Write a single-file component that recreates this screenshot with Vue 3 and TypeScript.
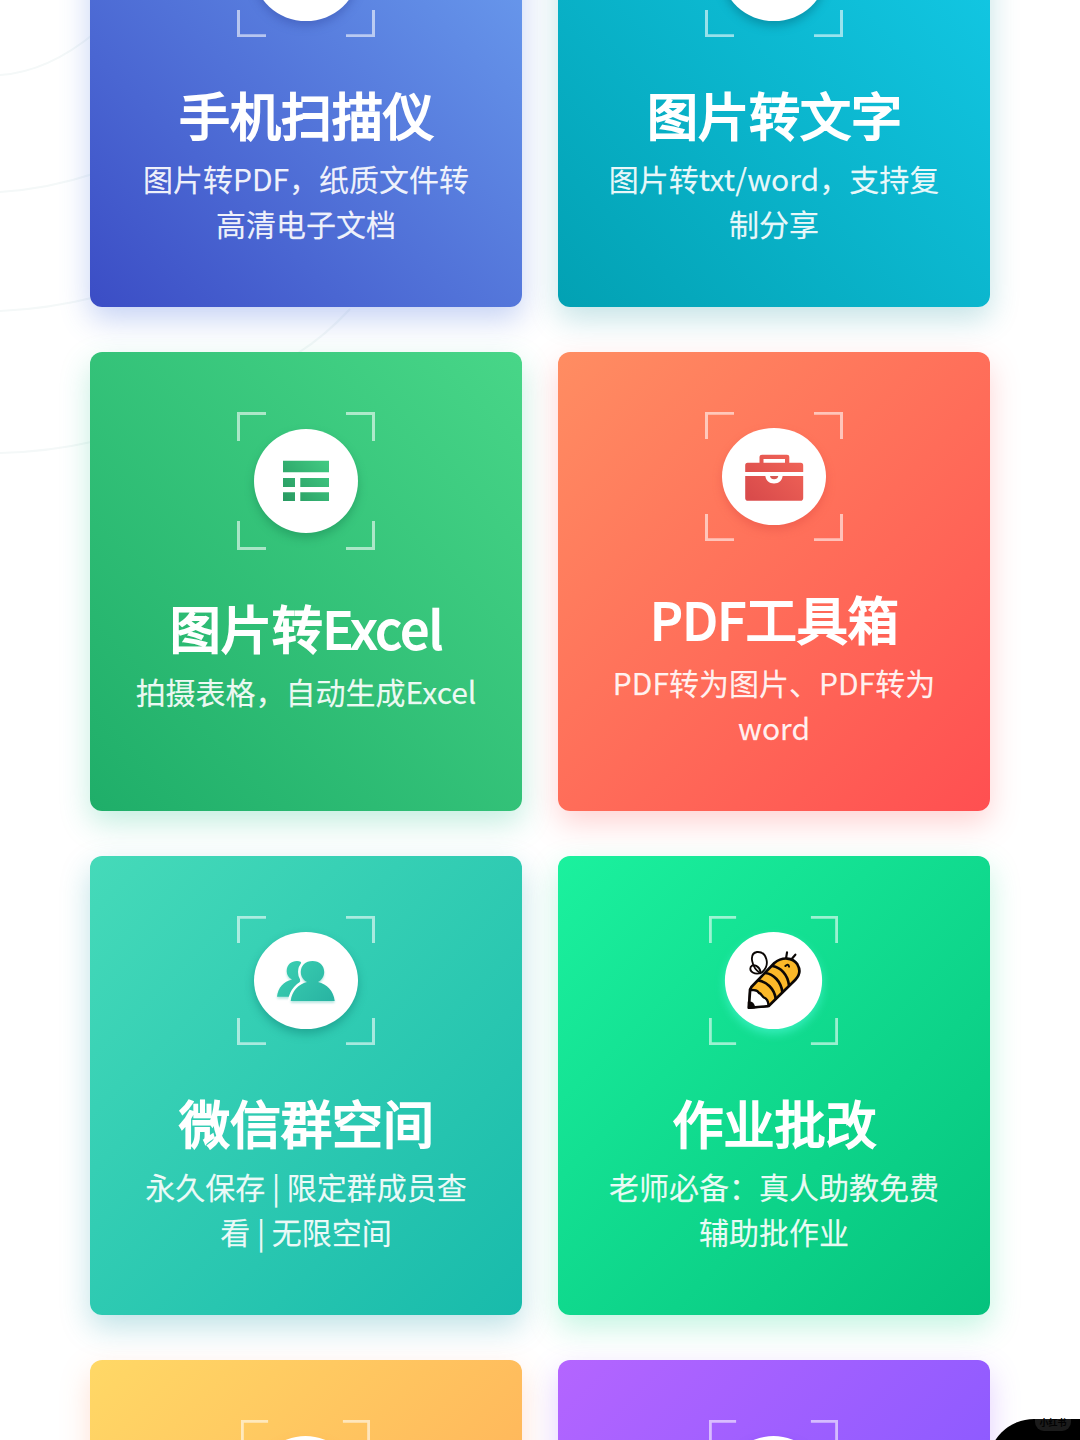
<script setup lang="ts">
type IconName = 'none' | 'table' | 'toolbox' | 'group' | 'bee'

interface Tool {
  id: string
  title: string
  desc: string
  icon: IconName
  shape: 'wide' | 'tall' | 'small'
}

const tools: Tool[] = [
  { id: 'scan', title: '手机扫描仪', desc: '图片转PDF，纸质文件转高清电子文档', icon: 'none', shape: 'wide' },
  { id: 'ocr', title: '图片转文字', desc: '图片转txt/word，支持复制分享', icon: 'none', shape: 'wide' },
  { id: 'excel', title: '图片转Excel', desc: '拍摄表格，自动生成Excel', icon: 'table', shape: 'tall' },
  { id: 'pdf', title: 'PDF工具箱', desc: 'PDF转为图片、PDF转为word', icon: 'toolbox', shape: 'wide' },
  { id: 'space', title: '微信群空间', desc: '永久保存 | 限定群成员查看 | 无限空间', icon: 'group', shape: 'wide' },
  { id: 'homework', title: '作业批改', desc: '老师必备：真人助教免费辅助批作业', icon: 'bee', shape: 'small' },
  { id: 'more-a', title: '', desc: '', icon: 'none', shape: 'small' },
  { id: 'more-b', title: '', desc: '', icon: 'none', shape: 'small' },
]

const frontPerson =
  'M53.700 91C55 80 61.500 73 70 70.700C66 68.500 63.800 64.500 63.800 60C63.800 53 68.500 48.200 75.500 48.200S87.200 53 87.200 60C87.200 64.500 85 68.500 81 70.700C90 73 96.500 80 97.700 91Z'
</script>

<template>
  <main class="page">
    <svg class="arcs" viewBox="0 0 400 480" fill="none" stroke="#f4f8f8" stroke-width="2">
      <path d="M0 75Q48 72 96 32" />
      <path d="M0 192Q48 189 96 173" />
      <path d="M0 311Q48 309 96 297" />
      <path d="M0 453Q48 452 96 441" />
      <path d="M298 353Q325 336 350 309" />
    </svg>

    <section class="grid">
      <article v-for="tool in tools" :key="tool.id" class="card" :class="tool.id">
        <svg class="icon" :class="tool.shape" viewBox="0 0 138 138" preserveAspectRatio="none">
          <defs>
            <linearGradient id="g-table" gradientUnits="userSpaceOnUse" x1="46" y1="89" x2="92" y2="49">
              <stop offset="0" stop-color="#289961" /><stop offset="1" stop-color="#41cb83" />
            </linearGradient>
            <linearGradient id="g-box" gradientUnits="userSpaceOnUse" x1="45" y1="90" x2="90" y2="45">
              <stop offset="0" stop-color="#d94b4b" /><stop offset="1" stop-color="#f06357" />
            </linearGradient>
            <linearGradient id="g-group" gradientUnits="userSpaceOnUse" x1="45" y1="50" x2="90" y2="92">
              <stop offset="0" stop-color="#3bceb1" /><stop offset="1" stop-color="#29b5a3" />
            </linearGradient>
          </defs>
          <path class="frame" d="M1.500 29V1.500H29M109 1.500H136.500V29M136.500 109V136.500H109M29 136.500H1.500V109" />
          <circle class="disc" cx="69" cy="69" r="52" />

          <path
            v-if="tool.icon === 'table'"
            fill="url(#g-table)"
            d="M46 48.700H92V60.300H46zM46 66H58V75H46zM63.300 66H92V75H63.300zM46 80.300H58V89H46zM63.300 80.300H92V89H63.300z"
          />

          <g v-else-if="tool.icon === 'toolbox'">
            <path
              fill="url(#g-box)"
              fill-rule="evenodd"
              d="M42.500 54.200H54.500V48Q54.500 45.700 57 45.700H82Q84.300 45.700 84.300 48V54.200H95.800Q98.200 54.200 98.200 57V64.200H40.200V57Q40.200 54.200 42.500 54.200ZM58.500 50.300V54.200H80V50.300Z"
            />
            <path fill="url(#g-box)" d="M40.200 68.500H98.200V92Q98.200 95 95.500 95H43Q40.200 95 40.200 92Z" />
            <path fill="#fff" d="M60.300 67.500H77.700C77.700 73 73.800 76.600 69 76.600S60.300 73 60.300 67.500Z" />
            <path fill="#d85852" d="M65 68.500H73.300Q72.500 72 69.100 72T65 68.500Z" />
          </g>

          <g v-else-if="tool.icon === 'group'">
            <path
              class="person"
              fill="url(#g-group)"
              d="M40 86.300C41 77 46.500 70 55 68C51.500 66 49.700 62.500 49.700 59C49.700 52 54.500 48.200 60 48.200Q62 48.200 64 49.200L62 86.300Z"
            />
            <path fill="#fff" stroke="#fff" stroke-width="5.500" :d="frontPerson" />
            <path class="person" fill="url(#g-group)" :d="frontPerson" />
          </g>

          <g
            v-else-if="tool.icon === 'bee'"
            transform="scale(.3567) translate(-60 -33)"
            fill="none"
            stroke="#0b0705"
            stroke-width="8"
            stroke-linecap="round"
            stroke-linejoin="round"
          >
            <path stroke-width="5.500" d="M214 205C188 188 178 146 204 141C232 139 245 178 220 201" />
            <path stroke-width="5.500" d="M218 203C196 212 180 198 185 186C193 174 212 184 215 202" />
            <path stroke-width="6.500" d="M291 160L294 142M306 164L319 149" />
            <path fill="#fbb829" d="M187 246L256 174C280 154 311 157 325 178C335 195 331 212 319 224L239 303L180 308L183 254Z" />
            <path
              fill="#fff"
              stroke-width="7"
              d="M184 253L180 308L238 303C239 289 232 279 224 277C219 275 217 265 210 264C205 252 192 258 184 253Z"
            />
            <path fill="#0b0705" stroke-width="4" d="M178 291Q193 289 197 308L178 310Z" />
            <path d="M250 183C275 187 296 208 300 241M229 204C254 207 276 230 280 261M208 226C233 230 256 251 260 281" />
            <path stroke-width="6" d="M289 183Q298 174 300 185" />
          </g>
        </svg>
        <h2 class="title">{{ tool.title }}</h2>
        <p class="desc">{{ tool.desc }}</p>
      </article>
    </section>

    <div class="corner"><span class="mark">小红书</span></div>
  </main>
</template>

<style>
body {
  margin: 0;
  overflow: hidden;
}
</style>

<style scoped>
.page {
  position: relative;
  width: 1080px;
  height: 1440px;
  overflow: hidden;
  background: #fff;
  font-family: 'Noto Sans CJK SC', sans-serif;
}

.arcs {
  position: absolute;
  left: 0;
  top: 0;
  width: 400px;
  height: 480px;
}

.grid {
  position: relative;
  display: grid;
  grid-template-columns: 432px 432px;
  grid-auto-rows: 459px;
  gap: 45px 36px;
  justify-content: center;
  margin-top: -152px;
}

.card {
  box-sizing: border-box;
  display: flex;
  flex-direction: column;
  align-items: center;
  padding: 60px 45px 0;
  border-radius: 12px;
  color: #fff;
  text-align: center;
}

.icon {
  flex: none;
  width: 138px;
  height: 129px;
  overflow: visible;
}

.icon.tall {
  height: 138px;
}

.icon.small {
  width: 129px;
  margin-right: 1px;
}

.frame {
  fill: none;
  stroke: rgba(255, 255, 255, 0.58);
  stroke-width: 3;
}

.disc {
  fill: #fff;
  filter: drop-shadow(0 5px 5px var(--disc-shadow));
}

.person {
  filter: drop-shadow(0 2px 1px rgba(41, 181, 163, 0.35));
}

.title {
  margin: 41px 0 0 1px;
  font-size: 51px;
  font-weight: 400;
  line-height: 72px;
  white-space: nowrap;
  -webkit-text-stroke: 2.1px #fff;
}

.desc {
  width: 342px;
  margin: 6px 0 0;
  font-size: 30px;
  line-height: 45px;
  color: rgba(255, 255, 255, 0.92);
  -webkit-text-stroke: 0.25px rgba(255, 255, 255, 0.6);
}

.scan {
  --disc-shadow: rgba(40, 60, 150, 0.35);
  background: linear-gradient(45deg, #3b4dc5, #6fa4f2);
  box-shadow: 0 12px 30px rgba(75, 115, 220, 0.32);
}

.ocr {
  --disc-shadow: rgba(0, 90, 110, 0.4);
  background: linear-gradient(45deg, #02a1b3, #15cdeb);
  box-shadow: 0 12px 30px rgba(10, 140, 150, 0.24);
}

.excel {
  --disc-shadow: rgba(20, 120, 75, 0.4);
  background: linear-gradient(45deg, #1fae69, #48d688);
  box-shadow: 0 12px 30px rgba(40, 195, 145, 0.28);
}

.pdf {
  --disc-shadow: rgba(215, 65, 60, 0.35);
  background: linear-gradient(135deg, #ff8d62, #ff4f51);
  box-shadow: 0 12px 30px rgba(255, 85, 85, 0.26);
}

.space {
  --disc-shadow: rgba(10, 120, 110, 0.45);
  background: linear-gradient(135deg, #45dab9, #18bbab);
  box-shadow: 0 12px 30px rgba(20, 150, 165, 0.28);
}

.homework {
  --disc-shadow: rgba(70, 245, 205, 0.7);
  background: linear-gradient(135deg, #1bf19e, #05c27d);
  box-shadow: 0 12px 30px rgba(20, 215, 140, 0.26);
}

.more-a {
  --disc-shadow: rgba(255, 170, 70, 0.5);
  background: linear-gradient(135deg, #ffd866, #ffa254);
  box-shadow: 0 12px 30px rgba(255, 140, 90, 0.26);
}

.more-b {
  --disc-shadow: rgba(110, 60, 240, 0.5);
  background: linear-gradient(135deg, #b465ff, #7453ff);
  box-shadow: 0 12px 30px rgba(150, 80, 255, 0.28);
}

.corner {
  position: absolute;
  left: 988px;
  top: 1419px;
  width: 92px;
  height: 90px;
  border-radius: 46px 0 0 0;
  background: #000;
}

.mark {
  position: absolute;
  left: 47px;
  top: 0;
  width: 36px;
  height: 12px;
  border-radius: 0 0 9px 9px;
  background: #1b1b1b;
  color: #020202;
  font-size: 9px;
  font-weight: 700;
  line-height: 8px;
  text-align: center;
}
</style>
